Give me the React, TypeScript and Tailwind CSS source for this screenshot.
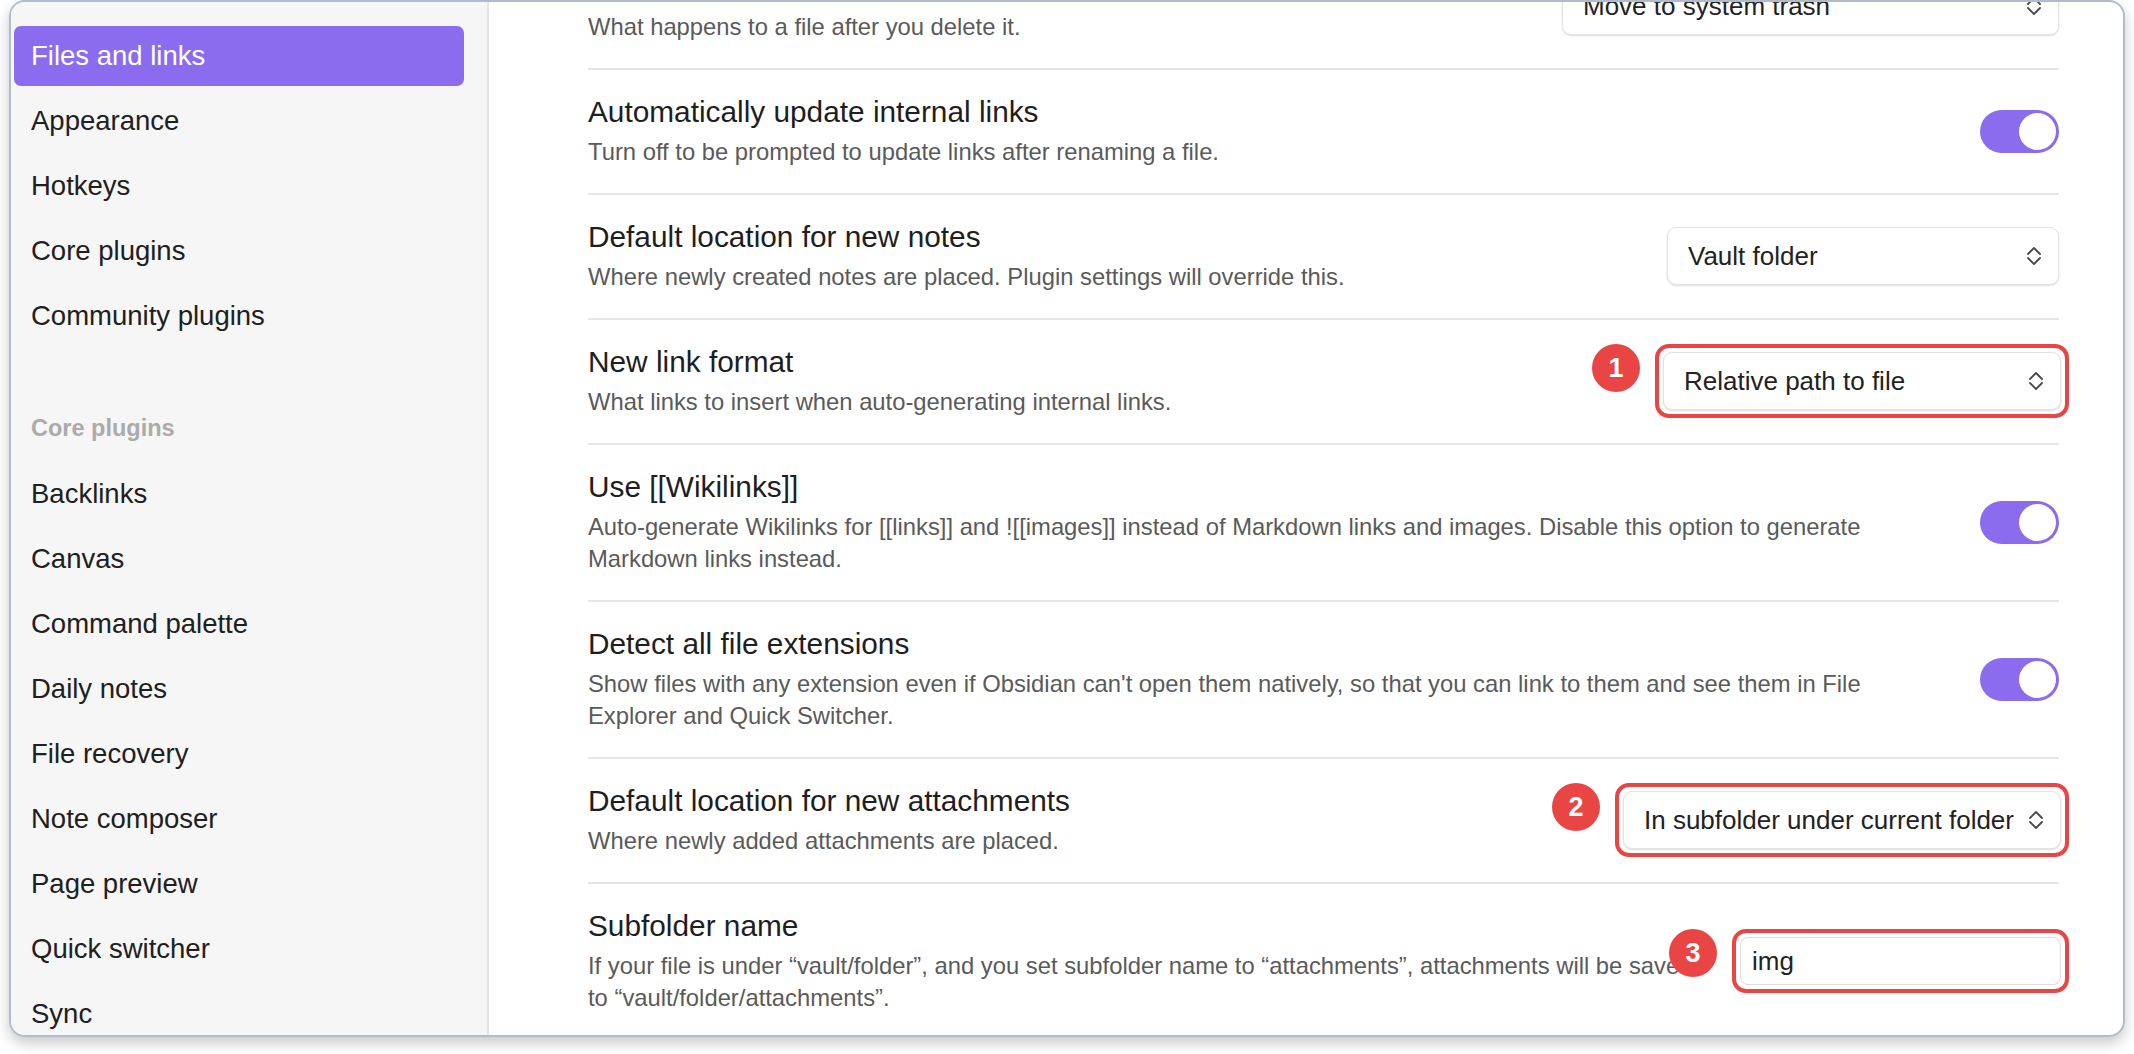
import React from "react";

const navTop = ["Files and links", "Appearance", "Hotkeys", "Core plugins", "Community plugins"];
const navCore = [
  "Backlinks",
  "Canvas",
  "Command palette",
  "Daily notes",
  "File recovery",
  "Note composer",
  "Page preview",
  "Quick switcher",
  "Sync",
];

function Chevrons() {
  return (
    <svg width="16" height="20" viewBox="0 0 16 20" fill="none" stroke="#4a4a4a" strokeWidth="1.8" strokeLinecap="round" strokeLinejoin="round">
      <path d="M2 8 L8 2 L14 8" />
      <path d="M2 12 L8 18 L14 12" />
    </svg>
  );
}

function Dropdown({ value, className }: { value: string; className: string }) {
  return (
    <div
      className={`${className} h-[58px] flex items-center justify-between pl-[20px] pr-[16px] bg-white rounded-[9px] border border-[#e3e3e3] shadow-[0_1px_2px_rgba(0,0,0,0.14)] text-[26px] text-[#222]`}
    >
      <span className="whitespace-nowrap">{value}</span>
      <Chevrons />
    </div>
  );
}

function Toggle() {
  return (
    <div className="w-[79px] h-[43px] rounded-full bg-[#8b6cef] p-[3px] flex justify-end">
      <div className="w-[37px] h-[37px] rounded-full bg-white" />
    </div>
  );
}

function Marked({ n, children }: { n: number; children: React.ReactNode }) {
  return (
    <div className="relative mr-[-10px] rounded-[14px] border-4 border-[#e94545] p-[4px]">
      <div className="absolute top-[-4px] right-[calc(100%+19px)] w-[48px] h-[48px] rounded-full bg-[#e94545] text-white font-bold text-[27px] flex items-center justify-center">
        {n}
      </div>
      {children}
    </div>
  );
}

type RowProps = {
  title: string;
  desc: string;
  control: React.ReactNode;
  info?: string;
};

function Row({ title, desc, control, info = "max-w-[1330px]" }: RowProps) {
  return (
    <div className="flex items-center border-t-2 border-[#e6e6e6] pt-[24px] pb-[25px]">
      <div className={`flex-1 ${info}`}>
        <div className="text-[29.8px] leading-[36px] text-[#1e1e1e]">{title}</div>
        <div className="mt-[6px] text-[23.8px] leading-[32px] text-[#5a5a5a]">{desc}</div>
      </div>
      <div className="ml-auto flex-none flex items-center">{control}</div>
    </div>
  );
}

export default function App() {
  return (
    <div className="min-h-screen bg-white font-['Liberation_Sans',Arial,sans-serif]">
      <div className="ml-[9px] w-[2116px] h-[1037px] rounded-[16px] border-2 border-[#b2bbca] bg-white overflow-hidden flex shadow-[0_6px_14px_rgba(0,0,0,0.22)]">
        {/* sidebar */}
        <div className="w-[478px] flex-none bg-[#f6f6f6] border-r-2 border-[#e4e4e4] pl-[3px] pt-[24px] flex flex-col gap-[5px] overflow-hidden">
          {navTop.map((item, i) => (
            <div
              key={item}
              className={
                i === 0
                  ? "w-[450px] h-[60px] flex-none flex items-center pl-[17px] rounded-[7px] bg-[#8b6cef] text-white text-[27.5px]"
                  : "w-[450px] h-[60px] flex-none flex items-center pl-[17px] text-[#202020] text-[27.5px]"
              }
            >
              {item}
            </div>
          ))}
          <div className="mt-[48px] w-[450px] h-[60px] flex-none flex items-center pl-[17px] text-[#ababab] font-bold text-[23.5px]">
            Core plugins
          </div>
          {navCore.map((item) => (
            <div key={item} className="w-[450px] h-[60px] flex-none flex items-center pl-[17px] text-[#202020] text-[27.5px]">
              {item}
            </div>
          ))}
        </div>

        {/* content */}
        <div className="flex-1 overflow-hidden pl-[99px] pr-[64px]">
          <div className="mt-[-59px]">
            <Row
              title="Deleted files"
              desc="What happens to a file after you delete it."
              control={<Dropdown value="Move to system trash" className="w-[497px]" />}
            />
            <Row
              title="Automatically update internal links"
              desc="Turn off to be prompted to update links after renaming a file."
              control={<Toggle />}
            />
            <Row
              title="Default location for new notes"
              desc="Where newly created notes are placed. Plugin settings will override this."
              control={<Dropdown value="Vault folder" className="w-[392px]" />}
            />
            <Row
              title="New link format"
              desc="What links to insert when auto-generating internal links."
              control={
                <Marked n={1}>
                  <Dropdown value="Relative path to file" className="w-[398px]" />
                </Marked>
              }
            />
            <Row
              title="Use [[Wikilinks]]"
              desc="Auto-generate Wikilinks for [[links]] and ![[images]] instead of Markdown links and images. Disable this option to generate Markdown links instead."
              control={<Toggle />}
            />
            <Row
              title="Detect all file extensions"
              desc="Show files with any extension even if Obsidian can't open them natively, so that you can link to them and see them in File Explorer and Quick Switcher."
              control={<Toggle />}
            />
            <Row
              title="Default location for new attachments"
              desc="Where newly added attachments are placed."
              control={
                <Marked n={2}>
                  <Dropdown value="In subfolder under current folder" className="w-[438px]" />
                </Marked>
              }
            />
            <Row
              title="Subfolder name"
              desc="If your file is under “vault/folder”, and you set subfolder name to “attachments”, attachments will be saved to “vault/folder/attachments”."
              info="max-w-[1126px]"
              control={
                <Marked n={3}>
                  <div className="w-[321px] h-[48px] flex items-center pl-[11px] bg-white rounded-[8px] border border-[#dcdcdc] text-[26px] text-[#222]">
                    img
                  </div>
                </Marked>
              }
            />
          </div>
        </div>
      </div>
    </div>
  );
}
